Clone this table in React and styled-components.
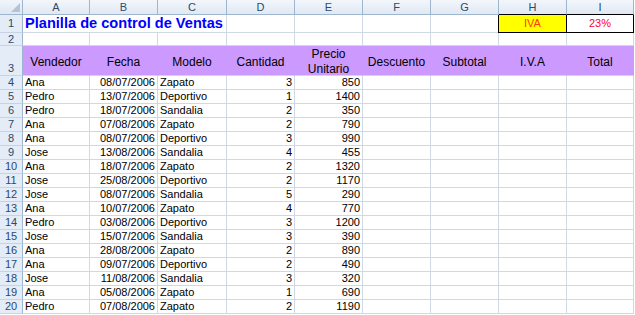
import React from "react";
import styled, { createGlobalStyle } from "styled-components";

const GlobalStyle = createGlobalStyle`
  body {
    margin: 0;
    background: #ffffff;
    font-family: "Liberation Sans", Arial, sans-serif;
  }
`;

const GRID = "#d0d7e5";
const HEAD_LINE = "#9eb6ce";
const PURPLE = "#cc99ff";

const Sheet = styled.div`
  display: grid;
  grid-template-columns: 23px 67px 68px 69px 68px 68px 68px 68px 68px 67px;
  grid-template-rows: 15px 18px 13px 30px repeat(17, 14px);
  width: 634px;
  background: #ffffff;
`;

const Corner = styled.div`
  position: relative;
  box-sizing: border-box;
  background: linear-gradient(#f1f5fb, #dfe7f2);
  border-right: 1px solid ${HEAD_LINE};
  border-bottom: 1px solid ${HEAD_LINE};

  &::after {
    content: "";
    position: absolute;
    right: 2px;
    bottom: 2px;
    border-left: 9px solid transparent;
    border-bottom: 9px solid #b4c3d6;
  }
`;

const ColHead = styled.div`
  box-sizing: border-box;
  display: flex;
  align-items: center;
  justify-content: center;
  background: linear-gradient(#f3f7fc, #e0e8f3);
  border-right: 1px solid ${HEAD_LINE};
  border-bottom: 1px solid ${({ $strong }) => ($strong ? "#000" : HEAD_LINE)};
  color: #2c4a6b;
  font-size: 11px;
`;

const RowHead = styled.div`
  box-sizing: border-box;
  display: flex;
  align-items: ${({ $bottom }) => ($bottom ? "flex-end" : "center")};
  justify-content: center;
  background: #e4ecf7;
  border-right: 1px solid ${HEAD_LINE};
  border-bottom: 1px solid #c5d3e5;
  color: #2c4a6b;
  font-size: 11px;
  line-height: 13px;
`;

const Cell = styled.div`
  box-sizing: border-box;
  display: flex;
  align-items: flex-end;
  justify-content: ${({ $align }) =>
    $align === "right" ? "flex-end" : $align === "center" ? "center" : "flex-start"};
  grid-column: span ${({ $span }) => $span || 1};
  padding: 0 2px 0 2px;
  background: ${({ $fill }) => $fill || "#ffffff"};
  border-right: 1px solid ${({ $line }) => $line || GRID};
  border-bottom: 1px solid ${({ $line }) => $line || GRID};
  color: ${({ $color }) => $color || "#000"};
  font-size: 11px;
  line-height: 13px;
  white-space: nowrap;
  overflow: visible;
`;

const Boxed = styled(Cell)`
  align-items: center;
  position: relative;
  box-shadow: -1px 0 0 #000;
`;

const Title = styled(Cell)`
  align-items: center;
  color: #0000ff;
  font-size: 14.6px;
  font-weight: bold;
`;

const HeadCell = styled.div`
  box-sizing: border-box;
  display: flex;
  align-items: center;
  justify-content: center;
  text-align: center;
  padding-top: 3px;
  background: ${PURPLE};
  border-right: 1px solid ${PURPLE};
  border-bottom: 1px solid ${GRID};
  color: #000;
  font-size: 12px;
  line-height: 15px;
`;

const columns = ["A", "B", "C", "D", "E", "F", "G", "H", "I"];

const headers = [
  "Vendedor",
  "Fecha",
  "Modelo",
  "Cantidad",
  <>Precio<br />Unitario</>,
  "Descuento",
  "Subtotal",
  "I.V.A",
  "Total",
];

const sales = [
  ["Ana", "08/07/2006", "Zapato", 3, 850],
  ["Pedro", "13/07/2006", "Deportivo", 1, 1400],
  ["Pedro", "18/07/2006", "Sandalia", 2, 350],
  ["Ana", "07/08/2006", "Zapato", 2, 790],
  ["Ana", "08/07/2006", "Deportivo", 3, 990],
  ["Jose", "13/08/2006", "Sandalia", 4, 455],
  ["Ana", "18/07/2006", "Zapato", 2, 1320],
  ["Jose", "25/08/2006", "Deportivo", 2, 1170],
  ["Jose", "08/07/2006", "Sandalia", 5, 290],
  ["Ana", "10/07/2006", "Zapato", 4, 770],
  ["Pedro", "03/08/2006", "Deportivo", 3, 1200],
  ["Jose", "15/07/2006", "Sandalia", 3, 390],
  ["Ana", "28/08/2006", "Zapato", 2, 890],
  ["Ana", "09/07/2006", "Deportivo", 2, 490],
  ["Jose", "11/08/2006", "Sandalia", 3, 320],
  ["Ana", "05/08/2006", "Zapato", 1, 690],
  ["Pedro", "07/08/2006", "Zapato", 2, 1190],
];

const App = () => (
  <>
    <GlobalStyle />
    <Sheet>
      <Corner />
      {columns.map((c) => (
        <ColHead key={c} $strong={c === "H" || c === "I"}>
          {c}
        </ColHead>
      ))}

      <RowHead>1</RowHead>
      <Title $span={3}>Planilla de control de Ventas</Title>
      <Cell />
      <Cell />
      <Cell />
      <Cell />
      <Boxed $align="center" $fill="#ffff00" $line="#000" $color="#ff3c00">
        IVA
      </Boxed>
      <Boxed $align="center" $line="#000" $color="#ff0033">
        23%
      </Boxed>

      <RowHead>2</RowHead>
      {columns.map((c) => (
        <Cell key={c} />
      ))}

      <RowHead $bottom>3</RowHead>
      {headers.map((h, i) => (
        <HeadCell key={i}>{h}</HeadCell>
      ))}

      {sales.map(([seller, date, model, qty, price], i) => (
        <React.Fragment key={i}>
          <RowHead>{i + 4}</RowHead>
          <Cell>{seller}</Cell>
          <Cell $align="right">{date}</Cell>
          <Cell>{model}</Cell>
          <Cell $align="right">{qty}</Cell>
          <Cell $align="right">{price}</Cell>
          <Cell />
          <Cell />
          <Cell />
          <Cell />
        </React.Fragment>
      ))}
    </Sheet>
  </>
);

export default App;
